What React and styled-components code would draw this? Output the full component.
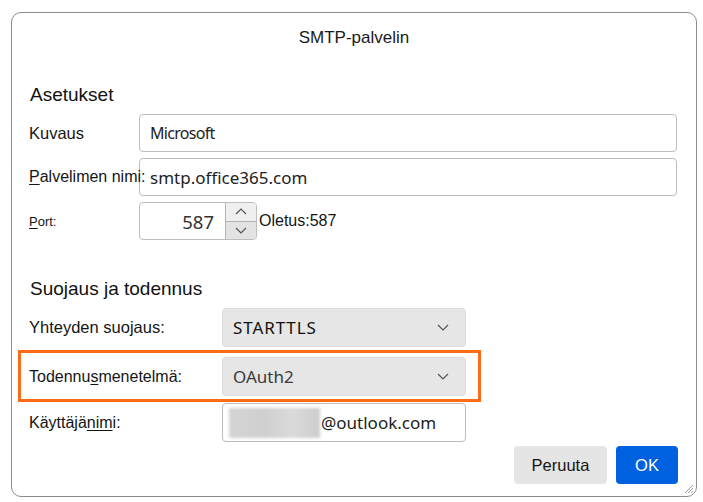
import React from "react";
import styled, { createGlobalStyle } from "styled-components";

const GlobalStyle = createGlobalStyle`
  html, body {
    margin: 0;
    padding: 0;
    background: #ffffff;
  }
  body {
    font-family: "Liberation Sans", Arial, sans-serif;
    color: #1a1a1a;
  }
`;

const Dialog = styled.div`
  position: relative;
  box-sizing: border-box;
  margin: 12px 0 0 11px;
  width: 686px;
  height: 485px;
  border: 1px solid #8c8c8c;
  border-radius: 10px;
  display: flex;
  flex-direction: column;
`;

const Title = styled.div`
  height: 50px;
  line-height: 50px;
  text-align: center;
  font-size: 17px;
  color: #1a1a1a;
`;

const Body = styled.div`
  padding: 0 0 0 17px;
`;

const SectionHeading = styled.h2`
  margin: ${({ $top }) => $top}px 0 8px 1px;
  font-size: 19px;
  line-height: 22px;
  font-weight: normal;
  color: #111;
`;

const FieldGrid = styled.div`
  display: grid;
  grid-template-columns: ${({ $label }) => $label}px ${({ $field }) => $field}px;
  row-gap: ${({ $gap }) => $gap}px;
  align-items: center;
`;

const Label = styled.label`
  position: relative;
  z-index: 1;
  white-space: nowrap;
  font-size: ${({ $size }) => $size || 16.5}px;
  color: #151515;
  width: 0;
  overflow: visible;
`;

const Key = styled.span`
  text-decoration: underline;
  text-underline-offset: 2px;
`;

const TextBox = styled.div`
  box-sizing: border-box;
  height: ${({ $h }) => $h || 38}px;
  width: ${({ $w }) => ($w ? `${$w}px` : "100%")};
  border: 1px solid #bdbdbd;
  border-radius: 4px;
  background: #fff;
  display: flex;
  align-items: center;
  padding-left: ${({ $pad }) => $pad || 10}px;
  font-family: "Noto Sans", sans-serif;
  font-size: ${({ $size }) => $size || 16}px;
  letter-spacing: ${({ $track }) => $track || 0}px;
  color: #222;
`;

const PortRow = styled.div`
  display: flex;
  align-items: center;
`;

const PortBox = styled.div`
  box-sizing: border-box;
  width: 118px;
  height: 38px;
  border: 1px solid #bdbdbd;
  border-radius: 4px;
  display: flex;
  overflow: hidden;
`;

const PortValue = styled.div`
  flex: 1;
  display: flex;
  align-items: center;
  justify-content: flex-end;
  padding-right: 11px;
  font-family: "Noto Sans", sans-serif;
  font-size: 18.5px;
  color: #333;
`;

const Spinner = styled.div`
  width: 30px;
  border-left: 1px solid #b5b5b5;
  display: flex;
  flex-direction: column;
`;

const SpinButton = styled.div`
  flex: 1;
  display: flex;
  align-items: center;
  justify-content: center;
  background: ${({ $down }) => ($down ? "#e3e3e3" : "#efefef")};
  border-top: ${({ $down }) => ($down ? "1px solid #b5b5b5" : "none")};
`;

const Hint = styled.span`
  margin-left: 2px;
  font-size: 16px;
  color: #151515;
`;

const Select = styled.div`
  box-sizing: border-box;
  width: 244px;
  height: 39px;
  border-radius: 4px;
  background: #e6e6e6;
  border: 1px solid #dcdcdc;
  display: flex;
  align-items: center;
  justify-content: space-between;
  padding: 0 16px 0 10px;
  font-family: "Noto Sans", sans-serif;
  font-size: 17px;
  color: ${({ $muted }) => ($muted ? "#3a3a3a" : "#111")};
  letter-spacing: ${({ $wide }) => ($wide ? "0.9px" : "0")};
`;

const Highlight = styled.div`
  position: relative;
  grid-column: 1 / -1;
  display: grid;
  grid-template-columns: 193px 244px;
  align-items: center;
  margin: 10px 0 7px;
  &::after {
    content: "";
    position: absolute;
    top: -7px;
    bottom: -6px;
    left: -11px;
    right: -15px;
    border: 3px solid #ff6a1a;
    pointer-events: none;
  }
`;

const Blurred = styled.span`
  display: inline-block;
  width: 91px;
  height: 30px;
  margin-right: 1px;
  background: linear-gradient(90deg, #d4d4d4, #cfcfcf 40%, #dadada 70%, #cdcdcd);
  filter: blur(1.5px);
`;

const Footer = styled.div`
  margin-top: auto;
  display: flex;
  justify-content: flex-end;
  gap: 9px;
  padding: 0 18px 12px 0;
`;

const Button = styled.button`
  box-sizing: border-box;
  height: 38px;
  min-width: ${({ $w }) => $w}px;
  border: none;
  border-radius: 4px;
  font-family: "Liberation Sans", Arial, sans-serif;
  font-size: 16.5px;
  background: ${({ $primary }) => ($primary ? "#0061e0" : "#e5e5e5")};
  color: ${({ $primary }) => ($primary ? "#ffffff" : "#151515")};
`;

const Grip = styled.svg`
  position: absolute;
  right: 2px;
  bottom: 2px;
`;

const Chevron = ({ up }) => (
  <svg width="12" height="7" viewBox="0 0 12 7">
    <path
      d={up ? "M1 6 L6 1 L11 6" : "M1 1 L6 6 L11 1"}
      fill="none"
      stroke="#555"
      strokeWidth="1.2"
    />
  </svg>
);

export default function App() {
  return (
    <>
      <GlobalStyle />
      <Dialog>
        <Title>SMTP-palvelin</Title>
        <Body>
          <SectionHeading $top={21}>Asetukset</SectionHeading>
          <FieldGrid $label={110} $field={538} $gap={6}>
            <Label>Kuvaus</Label>
            <TextBox $size={16} $track={-0.7}>Microsoft</TextBox>
            <Label $size={16}>
              <Key>P</Key>alvelimen nimi:
            </Label>
            <TextBox $size={17}>smtp.office365.com</TextBox>
            <Label $size={13}>
              <Key>P</Key>ort:
            </Label>
            <PortRow>
              <PortBox>
                <PortValue>587</PortValue>
                <Spinner>
                  <SpinButton>
                    <Chevron up />
                  </SpinButton>
                  <SpinButton $down>
                    <Chevron />
                  </SpinButton>
                </Spinner>
              </PortBox>
              <Hint>Oletus:587</Hint>
            </PortRow>
          </FieldGrid>

          <SectionHeading $top={38}>Suojaus ja todennus</SectionHeading>
          <FieldGrid $label={193} $field={244} $gap={0}>
            <Label>Yhteyden suojaus:</Label>
            <Select $wide>
              STARTTLS
              <Chevron />
            </Select>
            <Highlight>
              <Label $size={16}>
                Todennu<Key>s</Key>menetelmä:
              </Label>
              <Select $muted>
                OAuth2
                <Chevron />
              </Select>
            </Highlight>
            <Label $size={16}>
              Käyttäjä<Key>nim</Key>i:
            </Label>
            <TextBox $w={244} $h={39} $pad={6} $size={17}>
              <Blurred />
              @outlook.com
            </TextBox>
          </FieldGrid>
        </Body>
        <Footer>
          <Button $w={93}>Peruuta</Button>
          <Button $w={62} $primary>
            OK
          </Button>
        </Footer>
        <Grip width="12" height="12" viewBox="0 0 12 12">
          <path d="M11 3 L3 11 M11 6 L6 11 M11 9 L9 11" stroke="#999" strokeWidth="1" />
        </Grip>
      </Dialog>
    </>
  );
}
